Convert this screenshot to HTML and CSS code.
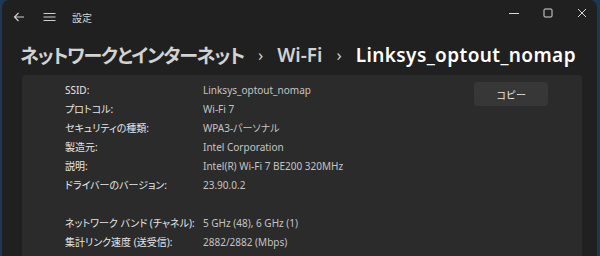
FILE: index.html
```html
<!DOCTYPE html>
<html lang="ja">
<head>
  <meta charset="UTF-8">
  <title>設定</title>
  <link rel="stylesheet" href="styles.css">
</head>
<body>
  <div class="window">
    <div class="titlebar">
      <div class="nav">
        <svg class="icon back" width="12" height="12" viewBox="0 0 12 12"><path d="M11 6H1.5M5.5 2L1.5 6l4 4" fill="none" stroke="#cfcfcf" stroke-width="1.2"/></svg>
        <svg class="icon menu" width="13" height="12" viewBox="0 0 13 12"><path d="M0.5 2.5h12M0.5 6h12M0.5 9.5h12" fill="none" stroke="#cfcfcf" stroke-width="1.1"/></svg>
        <span class="app-name">設定</span>
      </div>
      <div class="controls">
        <svg width="10" height="10" viewBox="0 0 10 10"><path d="M0 5.5h10" stroke="#d8d8d8" stroke-width="1"/></svg>
        <svg width="10" height="10" viewBox="0 0 10 10"><rect x="1" y="1" width="8" height="8" rx="1" fill="none" stroke="#d8d8d8" stroke-width="1"/></svg>
        <svg width="10" height="10" viewBox="0 0 10 10"><path d="M1 1l8 8M9 1l-8 8" stroke="#d8d8d8" stroke-width="1"/></svg>
      </div>
    </div>

    <h1 class="breadcrumb">
      <span class="crumb jp">ネットワークとインターネット</span>
      <span class="sep">›</span>
      <span class="crumb">Wi-Fi</span>
      <span class="sep">›</span>
      <span class="current">Linksys_optout_nomap</span>
    </h1>

    <div class="card">
      <div class="details">
        <span class="label">SSID:</span><span class="value">Linksys_optout_nomap</span>
        <span class="label">プロトコル:</span><span class="value">Wi-Fi 7</span>
        <span class="label">セキュリティの種類:</span><span class="value">WPA3-パーソナル</span>
        <span class="label">製造元:</span><span class="value">Intel Corporation</span>
        <span class="label">説明:</span><span class="value">Intel(R) Wi-Fi 7 BE200 320MHz</span>
        <span class="label">ドライバーのバージョン:</span><span class="value">23.90.0.2</span>
        <span class="blank"></span><span class="blank"></span>
        <span class="label">ネットワーク バンド (チャネル):</span><span class="value">5 GHz (48), 6 GHz (1)</span>
        <span class="label">集計リンク速度 (送受信):</span><span class="value">2882/2882 (Mbps)</span>
      </div>
      <button class="copy">コピー</button>
    </div>
  </div>
</body>
</html>
```

FILE: styles.css
```css
body {
  margin: 0;
  background: #1b3956;
  font-family: "Noto Sans", "Noto Sans CJK JP", sans-serif;
  font-feature-settings: "palt";
  overflow: hidden;
}
.window {
  margin: 0 3px 0 2px;
  height: 256px;
  background: #202020;
  border-radius: 7px 7px 0 0;
  color: #e4e4e4;
  display: flex;
  flex-direction: column;
  overflow: hidden;
}
.titlebar {
  display: flex;
  justify-content: space-between;
  align-items: center;
  height: 34px;
  flex: none;
}
.nav {
  display: flex;
  align-items: center;
  padding-left: 11px;
}
.icon.menu {
  margin-left: 18px;
}
.app-name {
  margin-left: 16px;
  font-size: 10px;
  color: #d6d6d6;
}
.controls {
  display: flex;
  align-items: center;
  gap: 24px;
  padding-right: 10px;
  margin-top: -8px;
}
.breadcrumb {
  margin: 0;
  padding: 0 0 0 18px;
  height: 41px;
  flex: none;
  display: flex;
  align-items: center;
  font-size: 19px;
  font-weight: 600;
  color: #d2d2d2;
  gap: 14px;
  white-space: nowrap;
}
.breadcrumb .jp {
  letter-spacing: -1.2px;
}
.breadcrumb .sep {
  font-weight: 400;
  font-size: 17px;
  color: #cfcfcf;
}
.breadcrumb .current {
  color: #fff;
  letter-spacing: 0.4px;
}
.card {
  flex: 1;
  margin: 0 15px 0 20px;
  background: #2b2b2b;
  display: flex;
  align-items: flex-start;
  padding: 6px 34px 0 43px;
  border-radius: 4px 4px 0 0;
}
.details {
  flex: 1;
  display: grid;
  grid-template-columns: 138px 1fr;
  grid-auto-rows: 19px;
  font-size: 10px;
  line-height: 19px;
}
.label {
  color: #e6e6e6;
}
.value {
  color: #c4c4c4;
}
.copy {
  margin-top: 1px;
  width: 74px;
  height: 24px;
  border: none;
  border-radius: 4px;
  background: #373737;
  color: #e8e8e8;
  font-family: inherit;
  font-size: 10px;
}
```
